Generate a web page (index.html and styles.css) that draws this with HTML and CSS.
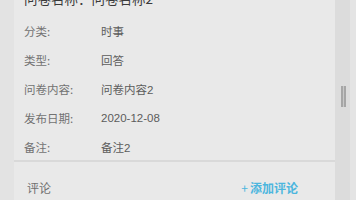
FILE: index.html
```html
<!DOCTYPE html>
<html lang="zh-CN">
<head>
    <meta charset="UTF-8">
    <meta name="viewport" content="width=device-width, initial-scale=1.0">
    <title>问卷详情</title>
    <link rel="stylesheet" href="styles.css">
</head>
<body>
    <div class="page">
        <div class="gutter"></div>

        <div class="main">
            <!-- 问卷信息 -->
            <div class="detail">
                <h2 class="title">问卷名称：问卷名称2</h2>
                <div class="row"><span class="label">分类:</span><span class="value">时事</span></div>
                <div class="row"><span class="label">类型:</span><span class="value">回答</span></div>
                <div class="row"><span class="label">问卷内容:</span><span class="value">问卷内容2</span></div>
                <div class="row"><span class="label">发布日期:</span><span class="value">2020-12-08</span></div>
                <div class="row"><span class="label">备注:</span><span class="value">备注2</span></div>
            </div>

            <!-- 评论 -->
            <div class="comments">
                <span class="comments-title">评论</span>
                <a class="add-comment" href="#"><span class="plus">+</span>添加评论</a>
            </div>
        </div>

        <div class="scrollbar">
            <div class="thumb"></div>
        </div>
    </div>
</body>
</html>
```

FILE: styles.css
```css
body {
    margin: 0;
    padding: 0;
    font-family: "Noto Sans CJK SC", "Liberation Sans", sans-serif;
    background-color: #e3e3e3;
    overflow: hidden;
}
.page {
    display: flex;
    height: 200px;
}
.gutter {
    width: 14px;
    flex-shrink: 0;
}
.main {
    flex: 1;
    background-color: #e9e9e9;
}
.detail {
    display: flow-root;
    padding-left: 10px;
    border-bottom: 2px solid #d9d9d9;
    height: 160px;
}
.title {
    margin: -12px 0 8px;
    font-size: 13.5px;
    font-weight: normal;
    line-height: 20px;
    color: #3a3a3a;
}
.row {
    display: flex;
    align-items: center;
    height: 29px;
    font-size: 11.5px;
}
.label {
    width: 77px;
    color: #727272;
}
.value {
    color: #5c5c5c;
    font-family: "Liberation Sans", "Noto Sans CJK SC", sans-serif;
}
.comments {
    display: flex;
    justify-content: space-between;
    align-items: center;
    padding: 16px 37px 0 13px;
    line-height: 20px;
    font-size: 12px;
}
.comments-title {
    color: #707070;
}
.add-comment {
    color: #4cb6de;
    font-weight: bold;
    text-decoration: none;
}
.plus {
    font-weight: normal;
    margin-right: 2px;
}
.scrollbar {
    width: 15px;
    flex-shrink: 0;
    border-right: 6px solid #e4e4e4;
    background-color: #dcdcdc;
    position: relative;
}
.thumb {
    position: absolute;
    left: 6px;
    top: 86px;
    width: 1px;
    height: 21px;
    border-left: 2px solid #a6a6a6;
    border-right: 2px solid #a6a6a6;
    background-color: #c8c8c8;
}
```
